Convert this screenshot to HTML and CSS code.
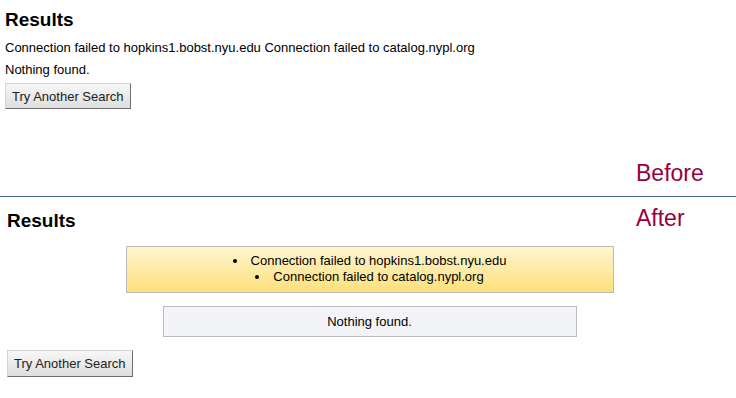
FILE: index.html
```
<!DOCTYPE html>
<html lang="en">

<head>
    <meta charset="UTF-8">
    <title>Results - before and after</title>
    <link rel="stylesheet" href="styles.css">
</head>

<body>
    <div class="before">
        <h2>Results</h2>
        <p>Connection failed to hopkins1.bobst.nyu.edu Connection failed to catalog.nypl.org</p>
        <p>Nothing found.</p>
        <button class="search-btn">Try Another Search</button>
    </div>

    <div class="tag-row">
        <span class="tag">Before</span>
    </div>
    <hr class="divider">

    <div class="after">
        <div class="after-head">
            <h2>Results</h2>
            <span class="tag">After</span>
        </div>
        <div class="notice warn">
            <ul>
                <li>Connection failed to hopkins1.bobst.nyu.edu</li>
                <li>Connection failed to catalog.nypl.org</li>
            </ul>
        </div>
        <div class="notice info">Nothing found.</div>
        <button class="search-btn">Try Another Search</button>
    </div>
</body>

</html>
```

FILE: styles.css
```
body,
html {
    margin: 0;
    padding: 0;
    background: #fff;
    color: #000;
    font-family: "Liberation Sans", Arial, sans-serif;
    font-size: 13px;
}

h2 {
    margin: 0;
    font-size: 19px;
    line-height: 24px;
    font-weight: bold;
}

.before {
    padding: 8px 0 0 5px;
}

.before p {
    margin: 0;
    line-height: 22px;
}

.before h2 {
    margin-bottom: 5px;
}

.search-btn {
    display: block;
    margin-top: 2px;
    height: 26px;
    padding: 0 6px;
    font-family: "Liberation Sans", Arial, sans-serif;
    font-size: 13px;
    color: #222;
    background: linear-gradient(#f7f7f7, #dedede);
    border: 1px solid;
    border-color: #d4d4d4 #6f6f6f #6f6f6f #d4d4d4;
    border-radius: 0;
}

.tag-row {
    display: flex;
    justify-content: flex-end;
    margin-top: 51px;
}

.tag {
    width: 100px;
    font-size: 23px;
    line-height: 26px;
    color: #99003d;
}

.divider {
    margin: 10px 0 0;
    height: 0;
    border: none;
    border-top: 1px solid #4a6b9c;
}

.after {
    padding: 8px 0 0 7px;
}

.after-head {
    display: flex;
    justify-content: space-between;
    align-items: flex-start;
}

.after-head h2 {
    margin-top: 4px;
}

.notice {
    margin: 13px auto 0;
    border: 1px solid #bbb;
    text-align: center;
    line-height: 16px;
    position: relative;
    left: -2px;
}

.warn {
    width: 486px;
    padding: 6px 0 7px;
    background: linear-gradient(#fff5cf, #fde07c);
}

.warn ul {
    margin: 0;
    padding: 0;
    list-style-position: inside;
}

.info {
    width: 412px;
    margin-top: 13px;
    padding: 7px 0 6px;
    background: #f3f4f8;
}

.after .search-btn {
    margin-top: 13px;
    height: 27px;
}
```
